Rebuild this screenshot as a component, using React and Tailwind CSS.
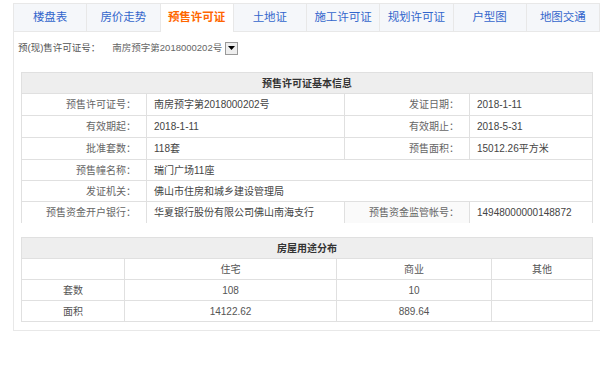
import React from 'react';

const tabs = ['楼盘表', '房价走势', '预售许可证', '土地证', '施工许可证', '规划许可证', '户型图', '地图交通'];

const label = 'border border-[#e0e0e0] text-right pr-[10px] text-[#666]';
const value = 'border border-[#e0e0e0] text-left pl-[7px] text-[#444]';
const cell = 'border border-[#e0e0e0]';

export default function App() {
  return (
    <div className="bg-white w-[600px] h-[369px] pt-[3px] text-[10px] font-['Liberation_Sans','Noto_Sans_CJK_SC',sans-serif]">
      <div className="ml-[13px] w-[587px] border-l border-b border-[#e8e8e8]">
        {/* Tabs */}
        <div className="flex h-[29px] bg-[#f5f7fa] border-t border-b border-[#e8e8e8] text-[11.5px]">
          {tabs.map((t, i) => (
            <div
              key={t}
              className={`flex-1 flex items-center justify-center border-r border-[#e8e8e8] ${
                i === 2 ? 'bg-white text-[#ff6600] font-bold -mb-px' : 'text-[#3366cc]'
              }`}
            >
              {t}
            </div>
          ))}
        </div>

        <div className="px-[7px] pb-[8px]">
          {/* Select row */}
          <div className="flex items-center h-[16px] mt-[8px] mb-[16px] text-[#555]">
            <span className="-ml-[3px] text-[9.5px]">预(现)售许可证号：</span>
            <div className="ml-[12px] flex items-center h-[16px] text-[#666] text-[9.5px]">
              <span>南房预字第2018000202号</span>
              <div className="ml-[3px] w-[13px] h-[13px] border border-[#999] bg-[#eee] flex items-center justify-center">
                <svg width="7" height="4" viewBox="0 0 7 4"><path d="M0 0h7L3.5 4z" fill="#000" /></svg>
              </div>
            </div>
          </div>

          {/* Table 1 */}
          <table className="w-full border-collapse table-fixed">
            <colgroup>
              <col className="w-[125px]" />
              <col className="w-[198px]" />
              <col className="w-[125px]" />
              <col />
            </colgroup>
            <tbody>
              <tr className="h-[21px]">
                <td colSpan={4} className={`${cell} bg-[#eeeeee] text-center font-bold text-[#333]`}>
                  预售许可证基本信息
                </td>
              </tr>
              <tr className="h-[22px]">
                <td className={label}>预售许可证号：</td>
                <td className={value}>南房预字第2018000202号</td>
                <td className={label}>发证日期：</td>
                <td className={value}>2018-1-11</td>
              </tr>
              <tr className="h-[22px]">
                <td className={label}>有效期起：</td>
                <td className={value}>2018-1-11</td>
                <td className={label}>有效期止：</td>
                <td className={value}>2018-5-31</td>
              </tr>
              <tr className="h-[22px]">
                <td className={label}>批准套数：</td>
                <td className={value}>118套</td>
                <td className={label}>预售面积：</td>
                <td className={value}>15012.26平方米</td>
              </tr>
              <tr className="h-[21px]">
                <td className={label}>预售幢名称：</td>
                <td colSpan={3} className={value}>瑞门广场11座</td>
              </tr>
              <tr className="h-[21px]">
                <td className={label}>发证机关：</td>
                <td colSpan={3} className={value}>佛山市住房和城乡建设管理局</td>
              </tr>
              <tr className="h-[21px]">
                <td className={`${label} border-b-transparent`}>预售资金开户银行：</td>
                <td className={`${value} border-b-transparent`}>华夏银行股份有限公司佛山南海支行</td>
                <td className={`${label} border-b-transparent bg-[#fafafa]`}>预售资金监管帐号：</td>
                <td className={`${value} border-b-transparent`}>14948000000148872</td>
              </tr>
            </tbody>
          </table>

          {/* Table 2 */}
          <table className="w-full border-collapse table-fixed mt-[14px] text-center text-[#555]">
            <colgroup>
              <col className="w-[103px]" />
              <col className="w-[212px]" />
              <col className="w-[155px]" />
              <col />
            </colgroup>
            <tbody>
              <tr className="h-[21px]">
                <td colSpan={4} className={`${cell} bg-[#eeeeee] font-bold text-[#333]`}>
                  房屋用途分布
                </td>
              </tr>
              <tr className="h-[21px]">
                <td className={cell}></td>
                <td className={cell}>住宅</td>
                <td className={cell}>商业</td>
                <td className={cell}>其他</td>
              </tr>
              <tr className="h-[21px]">
                <td className={cell}>套数</td>
                <td className={cell}>108</td>
                <td className={cell}>10</td>
                <td className={cell}></td>
              </tr>
              <tr className="h-[21px]">
                <td className={cell}>面积</td>
                <td className={cell}>14122.62</td>
                <td className={cell}>889.64</td>
                <td className={cell}></td>
              </tr>
            </tbody>
          </table>
        </div>
      </div>
    </div>
  );
}
